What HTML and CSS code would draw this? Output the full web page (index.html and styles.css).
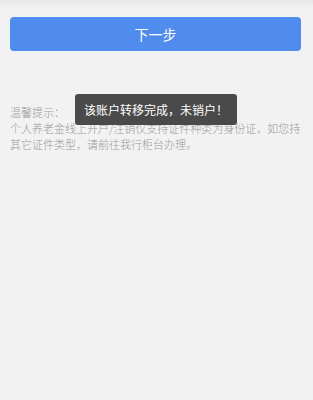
FILE: index.html
```html
<!DOCTYPE html>
<html lang="zh-cn">
<head>
	<meta charset="UTF-8">
	<title>个人养老金</title>
	<link rel="stylesheet" href="styles.css">
</head>
<body>
	<!-- 顶部阴影 -->
	<div class="topbar"></div>
	<div class="page">
		<div class="btn-wrap">
			<a class="btn" href="javascript:;">下一步</a>
		</div>
		<!-- 温馨提示 -->
		<div class="tips">
			<p>温馨提示：</p>
			<p>个人养老金线上开户/注销仅支持证件种类为身份证，如您持其它证件类型，请前往我行柜台办理。</p>
		</div>
	</div>
	<!-- toast -->
	<div class="toast">该账户转移完成，未销户！</div>
</body>
</html>
```

FILE: styles.css
```css
* {
	margin: 0;
	padding: 0;
}
html, body {
	height: 100%;
}
body {
	background-color: #f2f2f2;
	font-family: "Noto Sans CJK SC", "Noto Sans", sans-serif;
	position: relative;
}
.topbar {
	height: 8px;
	background: linear-gradient(#e6e6e8, #f2f2f2);
}
.page {
	padding: 9px 12px 0 10px;
}
.btn {
	display: block;
	height: 34px;
	line-height: 34px;
	border-radius: 4px;
	background-color: #508bee;
	color: #fff;
	text-align: center;
	font-size: 14px;
	text-decoration: none;
}
.tips {
	margin-top: 53px;
	font-size: 11px;
	line-height: 16px;
	color: #999;
	font-weight: 300;
}
.toast {
	position: absolute;
	left: 75px;
	top: 94px;
	width: 162px;
	height: 31px;
	line-height: 31px;
	border-radius: 3px;
	background-color: #4a4a4a;
	color: #fff;
	font-size: 12px;
	text-align: center;
}
```
